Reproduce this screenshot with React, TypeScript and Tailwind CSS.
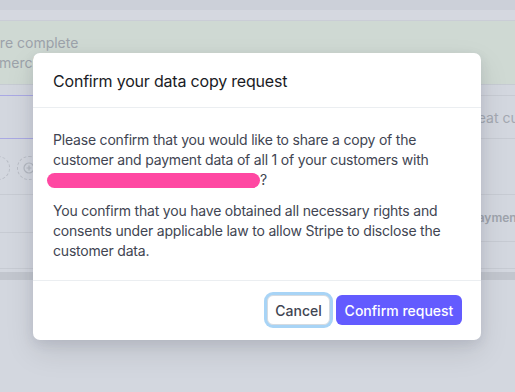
import React from 'react';

const LeftRail = () => (
  <div className="w-[60px] flex flex-col shrink-0">
    <div className="h-[11px] border-b border-[#aaa9e4]" />
    <div className="h-[43px] border-b border-[#aaa9e4]" />
    <div className="h-[56px] border-b border-[#c7cbd3] flex items-center gap-[7px] -ml-[14px] pt-[3px]">
      <div className="w-[24px] h-[24px] rounded-full border border-dashed border-[#b9bdc6] flex items-center justify-center text-[11px] text-[#a9aeb7]">1</div>
      <div className="w-[24px] h-[24px] rounded-full border border-dashed border-[#b9bdc6] flex items-center justify-center">
        <svg width="12" height="12" viewBox="0 0 12 12" fill="none" stroke="#b3b8c1" strokeWidth="1.2">
          <circle cx="6" cy="6" r="5" />
          <path d="M6 3.5v5M3.5 6h5" />
        </svg>
      </div>
    </div>
    <div className="h-[38px] border-b border-[#c7cbd3]" />
    <div className="h-[36px] border-b border-[#c7cbd3]" />
  </div>
);

const RightRail = () => (
  <div className="w-[60px] flex flex-col shrink-0 overflow-hidden">
    <div className="h-[11px] border-b border-[#c7cbd3]" />
    <div className="h-[43px] border-b border-[#c7cbd3] flex items-center pl-[1px] pt-[1px] text-[14px] text-[#a3a8b1] whitespace-nowrap">
      repeat customers
    </div>
    <div className="h-[56px] border-b border-[#c7cbd3]" />
    <div className="h-[47px] border-b border-[#c7cbd3] flex items-center pl-[15px] text-[12px] font-semibold text-[#9ea3ac] whitespace-nowrap">
      Payments
    </div>
    <div className="h-[27px] border-b border-[#c7cbd3]" />
  </div>
);

export default function App() {
  return (
    <div className="relative w-[515px] h-[392px] overflow-hidden bg-[#d3d7df] font-['Inter','Noto_Sans',sans-serif]">
      {/* Dimmed page behind the dialog */}
      <div className="h-[10px] bg-[#ccd0d9]" />
      <div className="h-[11px] bg-[#d5d8e0] border-b border-[#cacdd6]" />
      <div className="h-[64px] bg-[#cfd9d3] border-b border-[#c6cbd2] pt-[12px] text-[14px] leading-[20px] text-[#9ca2aa] whitespace-nowrap">
        <div className="-ml-[8px]">are complete</div>
        <div className="-ml-[1px]">merchants</div>
      </div>
      <div className="flex justify-between">
        <LeftRail />
        <RightRail />
      </div>
      <div className="mt-[3px] h-[8px] bg-[#c2c6ce]" />

      {/* Dialog */}
      <div className="absolute left-[33px] top-[53px] w-[448px] bg-white rounded-[7px] shadow-[0_4px_12px_rgba(50,50,93,0.10),0_12px_30px_rgba(0,0,0,0.10)]">
        <div className="h-[55px] flex items-center px-[20px] pt-[2px] border-b border-[#ebeef1]">
          <h2 className="text-[16px] font-normal text-[#1a1b25] tracking-[-0.2px]">Confirm your data copy request</h2>
        </div>
        <div className="px-[20px] pt-[22px] pb-[19px] border-b border-[#ebeef1] text-[14px] leading-[20px] text-[#414552] tracking-[-0.2px]">
          <p className="mb-[11px]">
            Please confirm that you would like to share a copy of the customer and payment data of all 1 of your customers with{' '}
            <span className="inline-block align-middle -ml-[6px] w-[213px] h-[15px] rounded-full bg-[#ff48a2] -mt-[2px]" />?
          </p>
          <p>
            You confirm that you have obtained all necessary rights and consents under applicable law to allow Stripe to disclose the customer data.
          </p>
        </div>
        <div className="flex justify-end items-center gap-[6px] pt-[14px] pb-[15px] pr-[19px]">
          <button className="h-[30px] w-[63px] rounded-[6px] bg-white border border-[#d5dbe1] shadow-[0_0_0_3px_#a8d4f6] text-[14px] font-medium text-[#414552]">
            Cancel
          </button>
          <button className="h-[30px] w-[126px] rounded-[6px] bg-[#635bff] text-[14px] font-medium text-white">
            Confirm request
          </button>
        </div>
      </div>
    </div>
  );
}
